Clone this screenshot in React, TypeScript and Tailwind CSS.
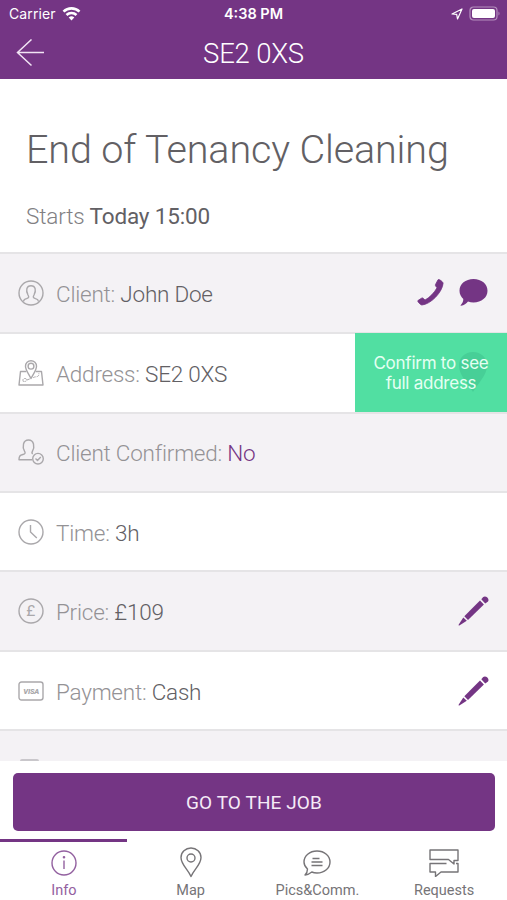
import type { ReactNode } from "react";

const roboto = "font-['Roboto','Liberation_Sans',sans-serif]";
const inter = "font-['Inter','Liberation_Sans',sans-serif]";

function Icon({ children, w = 26, h = 26 }: { children: ReactNode; w?: number; h?: number }) {
  return (
    <svg width={w} height={h} viewBox={`0 0 ${w} ${h}`} fill="none" stroke="currentColor" strokeWidth="1.4" strokeLinejoin="round" className="shrink-0">
      {children}
    </svg>
  );
}

const ClientIcon = () => (
  <Icon>
    <circle cx="13" cy="13" r="12" />
    <path d="M5.500 21.500c.2-1.800 1.200-2.300 3-2.800 2.600-.8 2.600-1.900 1.500-3.700C7.500 10.500 8.500 5.700 13 5.700s5.500 4.800 3 9.300c-1.100 1.800-1.100 2.900 1.500 3.700 1.800.5 2.800 1 3 2.800" />
  </Icon>
);

const AddressIcon = () => (
  <Icon>
    <path d="M13 18.500C10.500 13.500 7.500 10 7.500 6.200a5.500 5.500 0 0 1 11 0c0 3.800-3 7.300-5.500 12.300z" />
    <circle cx="13" cy="6.200" r="2.900" />
    <path d="M8.300 11.500H2.500L1 25h24l-1.500-13.500h-5.800" />
    <path d="M5.500 21.800c-1.500-2.800.5-4 2.500-3 1.500.9.500 2.700-1.500 2.700M9 20l3-1.200M15 18c1.500-1.800 3.500-.5 5.200-2 1-1 .8-2.500.5-3" strokeDasharray="3 1" strokeWidth="1" />
  </Icon>
);

const ConfirmedIcon = () => (
  <Icon>
    <path d="M14 20.800H1c0-3.700 1-4.500 3.900-5.300 2.400-.7 2.700-1.500 1.600-3.300C4.200 8 4.800 1 10.500 1s6.300 7 4 11.200c-.8 1.400-.8 2.200.2 2.800" />
    <circle cx="20" cy="19.700" r="5.300" />
    <path d="M17.500 19.500l2 2 3.300-3.500" />
  </Icon>
);

const ClockIcon = () => (
  <Icon>
    <circle cx="13" cy="13" r="12" />
    <path d="M12.500 6v7l6.300 6" />
  </Icon>
);

const PoundIcon = () => (
  <Icon>
    <circle cx="13" cy="13" r="12" />
    <text x="12.700" y="18.300" textAnchor="middle" fontSize="15.500" fill="currentColor" stroke="none" className={roboto}>£</text>
  </Icon>
);

const CardIcon = () => (
  <Icon h={20}>
    <rect x="1" y="1" width="24" height="18" rx="2.500" />
    <text x="13.300" y="12.700" textAnchor="middle" fontSize="7.500" fontWeight="900" fontStyle="italic" textLength="16" fill="currentColor" stroke="none" className={roboto}>VISA</text>
  </Icon>
);

const Pencil = () => (
  <svg width="32" height="32" viewBox="0 0 32 32" fill="#743584" className="-mt-[2px] shrink-0">
    <path d="M6.300 22.200l3.700 3.700L25.900 10.500 22 6.500z" />
    <path d="M23.300 5.200l1.900-2.100c2.400-2.300 7.200 2 4.500 4.600l-2.500 1.900z" />
    <path d="M5.300 23.400l3.500 3.400-7.500 4.600c-.6.3-1-.1-.7-.7z" />
  </svg>
);

type RowProps = { icon: ReactNode; label: string; value: string; purple?: boolean; size: string; actions?: ReactNode };

function Row({ icon, label, value, purple, size, actions }: RowProps) {
  return (
    <div className={`flex items-center border-t-2 border-[#e5e4e6] pl-[18px] text-[#aaa8ab] ${size}`}>
      <div className="-mt-px flex w-[38px] items-center">{icon}</div>
      <div className="pt-px text-[22.500px] leading-7 font-light tracking-[-0.230px] whitespace-nowrap text-[#949295]">
        {label}: <span className={purple ? "text-[#743584]" : "text-[#626064]"}>{value}</span>
      </div>
      {actions}
    </div>
  );
}

function Tab({ icon, label, active }: { icon: ReactNode; label: string; active?: boolean }) {
  return (
    <div className={`flex flex-1 flex-col items-center border-t-[3px] pt-[6px] pl-px ${active ? "border-[#743584] text-[#9361a0]" : "border-transparent text-[#767477]"}`}>
      <div className="flex h-[29px] items-center justify-center">{icon}</div>
      <div className="mt-[5px] text-[14.500px] leading-[18px]">{label}</div>
    </div>
  );
}

export default function App() {
  return (
    <div className={`flex h-[900px] w-[507px] flex-col overflow-hidden bg-white ${roboto}`}>
      <header className="h-[79px] shrink-0 bg-[#743584] text-white">
        <div className={`grid h-[27px] grid-cols-3 items-center pr-[7px] pl-[9px] text-[14px] ${inter}`}>
          <div className="flex items-center gap-[6px]">
            <span className="tracking-[0.100px]">Carrier</span>
            <svg width="19" height="14" viewBox="0 0 18 14" fill="none" stroke="white" strokeWidth="2.600">
              <path d="M1 4.600a11.500 11.500 0 0 1 16 0M4 8a7.200 7.200 0 0 1 10 0" />
              <path d="M6.200 10.500a4 4 0 0 1 5.600 0L9 13.500z" fill="white" stroke="none" />
            </svg>
          </div>
          <div className="-ml-[2px] pt-px text-center text-[14.500px] font-semibold whitespace-nowrap">4:38 PM</div>
          <div className="flex items-center justify-end gap-[6px]">
            <svg width="12" height="12" viewBox="0 0 12 12" fill="none" stroke="white" strokeWidth="1.200" strokeLinejoin="round">
              <path d="M1 6L11 1 6.500 11 5.700 6.300z" />
            </svg>
            <svg width="31" height="15" viewBox="0 0 31 15" fill="none">
              <rect x="1" y="1" width="27" height="13" rx="3.500" stroke="#b58fbe" strokeWidth="1.200" />
              <rect x="3" y="3" width="23" height="9" rx="2" fill="white" />
              <path d="M29.500 5.500c1.300.8 1.300 3.200 0 4z" fill="#b58fbe" />
            </svg>
          </div>
        </div>
        <div className="grid h-[52px] grid-cols-3 items-center px-4">
          <svg width="29" height="28" viewBox="0 0 29 28" fill="none" stroke="#f1e4f4" strokeWidth="1.500">
            <path d="M28 13.500H1.500M15.500 .5L1.500 13.500l14 13" />
          </svg>
          <h1 className="pt-px text-center text-[27.500px] leading-8 font-light tracking-[-0.200px] whitespace-nowrap">SE2 0XS</h1>
        </div>
      </header>

      <section className="h-[173px] shrink-0 pl-[26px] text-[#626064]">
        <h2 className="pt-[47px] text-[39.500px] leading-[48px] font-light tracking-[-0.130px] whitespace-nowrap">End of Tenancy Cleaning</h2>
        <p className="mt-[28px] text-[22.500px] leading-7 tracking-[-0.150px]">
          <span className="font-light text-[#818083]">Starts</span> Today 15:00
        </p>
      </section>

      <main className="flex h-[509px] shrink-0 flex-col overflow-hidden">
        <Row
          icon={<ClientIcon />} label="Client" value="John Doe" size="h-20 shrink-0 bg-[#f4f2f5]"
          actions={
            <div className="-mt-[2px] mr-[19px] ml-auto flex items-center gap-[15px]">
              <svg width="27" height="27" viewBox="0 0 27 27" fill="#743584" stroke="#743584" strokeWidth=".8" strokeLinejoin="round">
                <path d="M21 .8c.9-1 4.500 1.700 5.100 3.200C25.700 13 13.500 25.500 4.800 26 3.200 25.500.2 22.500.9 21.600l3.600-2.400c.9-.6 1.600-.3 2.200.5l1.300 1.400C13 18.300 17.500 13.400 20 8.800l-1.200-1.600c-.7-1-.5-1.500 0-2.300z" />
              </svg>
              <svg width="29" height="27" viewBox="0 0 29 27" fill="#743584">
                <path d="M14.500 0C22.500 0 28.500 5 28.500 11.700S22.500 23.400 14.500 23.400c-2 0-3.800-.3-5.500-.9-1.700 2.200-4 3.900-7 4.200-.5 0-.5-.5-.2-.8 1.700-1.700 2.500-3.400 2.500-5.900C2 17.900.5 15 .5 11.700.5 5 6.500 0 14.500 0z" />
              </svg>
            </div>
          }
        />
        <Row
          icon={<AddressIcon />} label="Address" value="SE2 0XS" size="h-20 shrink-0 bg-white"
          actions={
            <div className={`relative -mt-px ml-auto flex h-[79px] w-[152px] items-center justify-center bg-[#51dfa2] text-center text-[17px] leading-5 tracking-[-0.250px] text-[#e5fff3] ${inter}`}>
              <svg width="28" height="40" viewBox="0 0 28 40" className="absolute top-[19px] right-[20px]" fill="#47cf97">
                <path d="M14 0c8 0 14 5.500 14 13.500C28 23 20 30 14 40 8 30 0 23 0 13.500 0 5.500 6 0 14 0z" />
              </svg>
              <span className="relative whitespace-nowrap">Confirm to see<br />full address</span>
            </div>
          }
        />
        <Row icon={<ConfirmedIcon />} label="Client Confirmed" value="No" purple size="h-[79px] shrink-0 bg-[#f4f2f5]" />
        <Row icon={<ClockIcon />} label="Time" value="3h" size="h-[79px] shrink-0 bg-white pt-[2px]" />
        <Row icon={<PoundIcon />} label="Price" value="£109" size="h-20 shrink-0 bg-[#f4f2f5]" actions={<div className="mr-[17px] ml-auto"><Pencil /></div>} />
        <Row icon={<CardIcon />} label="Payment" value="Cash" size="h-[79px] shrink-0 bg-white pt-[2px]" actions={<div className="-mt-[2px] mr-[17px] ml-auto"><Pencil /></div>} />
        <div className="flex flex-1 items-end border-t-2 border-[#e5e4e6] bg-[#f4f2f5] pl-5">
          <div className="h-[2px] w-[19px] rounded-t-sm bg-[#c9c7cb]" />
        </div>
      </main>

      <div className="h-[78px] shrink-0 px-[13px] pt-3">
        <button className="h-[58px] w-[482px] rounded-[5px] bg-[#743584] pt-[2px] text-[19px] tracking-[0.100px] text-[#f5ebf7]">GO TO THE JOB</button>
      </div>

      <nav className="flex flex-1">
        <Tab
          active label="Info"
          icon={<Icon><circle cx="13" cy="13" r="12" /><path d="M13 10.500V19" /><circle cx="13" cy="7.300" r=".6" fill="currentColor" /></Icon>}
        />
        <Tab
          label="Map"
          icon={<Icon w={22} h={31}><path d="M11 29.500C8 22.500 1 17.500 1 10.500a10 9.500 0 0 1 20 0c0 7-7 12-10 19z" /><circle cx="11" cy="11" r="4" /></Icon>}
        />
        <Tab
          label="Pics&Comm."
          icon={<Icon w={28} h={26}><path d="M2 25c2-2 2.500-4 2.500-6C2.300 17 1 14.700 1 12 1 6 6.500 1 14 1s13 5 13 11-5.500 11-13 11c-2 0-3.700-.3-5.200-1C7 23.500 5 24.700 2 25z" /><path d="M9.500 8.500h7M8.500 12h11M8.500 15.500h11" /></Icon>}
        />
        <Tab
          label="Requests"
          icon={<Icon w={30} h={28}><path d="M1 10.500V1h28v10.500h-4V15l-5.500-4.500z" /><path d="M17.500 14.500H1V23h5.500v4.500L12 23h17v-8.500h-2" /></Icon>}
        />
      </nav>
    </div>
  );
}
